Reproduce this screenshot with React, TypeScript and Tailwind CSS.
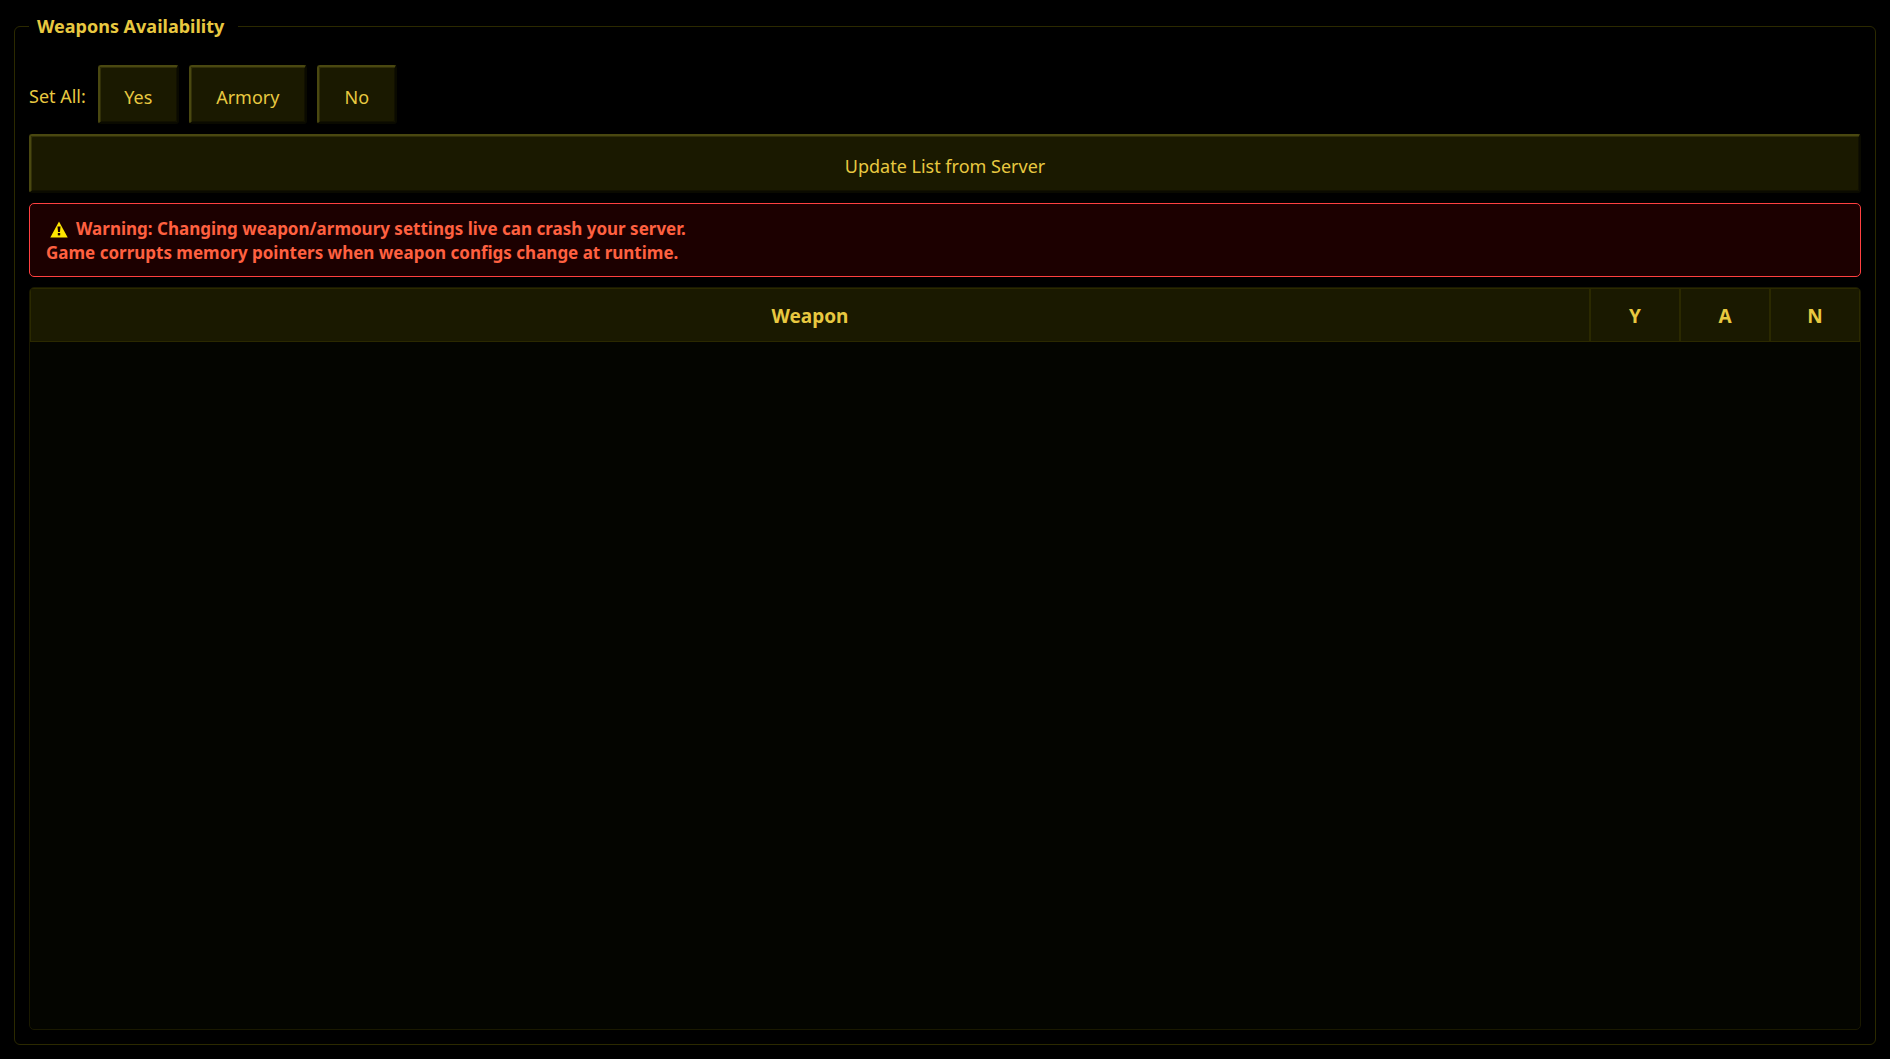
import React from "react";

type Availability = "yes" | "armory" | "no";

interface Weapon {
  id: string;
  name: string;
  availability: Availability;
}

interface BevelButtonProps {
  className?: string;
  onClick: () => void;
  children: React.ReactNode;
}

const BevelButton: React.FC<BevelButtonProps> = ({ className = "", onClick, children }) => {
  return (
    <button
      type="button"
      onClick={onClick}
      className={`h-[59px] shrink-0 cursor-pointer rounded-[3px] border-2 border-t-[#4a4810] border-r-[#0a0a00] border-b-[#0a0a00] border-l-[#4a4810] bg-[#1a1900] pt-1 shadow-[inset_1px_1px_0_#312f08,inset_-1px_-1px_0_#111000] hover:bg-[#262500] ${className}`}
    >
      {children}
    </button>
  );
};

const WarningIcon: React.FC = () => (
  <svg viewBox="0 0 18 17" className="mr-2 ml-1 inline-block h-[17px] w-[18px] align-[-3px]" aria-hidden="true">
    <path d="M9 0.5 L17.7 16.5 H0.3 Z" fill="#ffe600" />
    <path d="M7.5 5.5 h3 l-0.5 5.5 h-2 z" fill="#1c0000" />
    <rect x="7.8" y="12" width="2.4" height="2.4" fill="#1c0000" />
  </svg>
);

const setAllOptions: { value: Availability; label: string; width: string }[] = [
  { value: "yes", label: "Yes", width: "w-[81px]" },
  { value: "armory", label: "Armory", width: "w-[118px]" },
  { value: "no", label: "No", width: "w-[80px]" },
];

const choices: { value: Availability; label: string }[] = [
  { value: "yes", label: "Y" },
  { value: "armory", label: "A" },
  { value: "no", label: "N" },
];

const App: React.FC = () => {
  const [weapons, setWeapons] = React.useState<Weapon[]>([]);

  const setAll = (availability: Availability) => {
    setWeapons((prev) => prev.map((weapon) => ({ ...weapon, availability })));
  };

  const setOne = (id: string, availability: Availability) => {
    setWeapons((prev) => prev.map((weapon) => (weapon.id === id ? { ...weapon, availability } : weapon)));
  };

  return (
    <div className="h-screen bg-black p-3.5 font-['Noto_Sans',sans-serif] text-lg leading-6 text-[#e8c840]">
      <fieldset className="flex h-full flex-col gap-2.5 rounded-md border border-[#2b2900] px-3.5 pt-[27px] pb-3.5">
        <legend className="pr-3.5 pl-2 font-bold">Weapons Availability</legend>

        <div className="flex items-center gap-2.5" role="group" aria-label="Set All">
          <span className="mr-0.5 pt-0.5">Set All:</span>
          {setAllOptions.map((option) => (
            <BevelButton key={option.value} className={option.width} onClick={() => setAll(option.value)}>
              {option.label}
            </BevelButton>
          ))}
        </div>

        <BevelButton className="w-full" onClick={() => setWeapons([])}>
          Update List from Server
        </BevelButton>

        <div
          role="alert"
          className="rounded-[5px] border border-[#ff4040] bg-[#1c0000] px-4 pt-[13px] pb-[11px] text-[17px] leading-6 font-bold text-[#ff6040]"
        >
          <WarningIcon />
          Warning: Changing weapon/armoury settings live can crash your server.
          <br />
          Game corrupts memory pointers when weapon configs change at runtime.
        </div>

        <div className="min-h-0 flex-1 overflow-auto rounded-[5px] border border-[#1a1900] bg-[#040500]">
          <table className="w-full table-fixed border-separate border-spacing-0">
            <thead>
              <tr className="h-[54px] bg-[#1a1900] text-[19px]">
                <th scope="col" className="border border-[#2b2900] pt-0.5">
                  Weapon
                </th>
                {choices.map((choice) => (
                  <th key={choice.value} scope="col" className="w-[90px] border border-[#2b2900] pt-0.5">
                    {choice.label}
                  </th>
                ))}
              </tr>
            </thead>
            <tbody>
              {weapons.map((weapon) => (
                <tr key={weapon.id}>
                  <td className="px-3 py-2">{weapon.name}</td>
                  {choices.map((choice) => (
                    <td key={choice.value} className="text-center">
                      <input
                        type="radio"
                        name={weapon.id}
                        aria-label={`${weapon.name} ${choice.label}`}
                        checked={weapon.availability === choice.value}
                        onChange={() => setOne(weapon.id, choice.value)}
                      />
                    </td>
                  ))}
                </tr>
              ))}
            </tbody>
          </table>
        </div>
      </fieldset>
    </div>
  );
};

export default App;
